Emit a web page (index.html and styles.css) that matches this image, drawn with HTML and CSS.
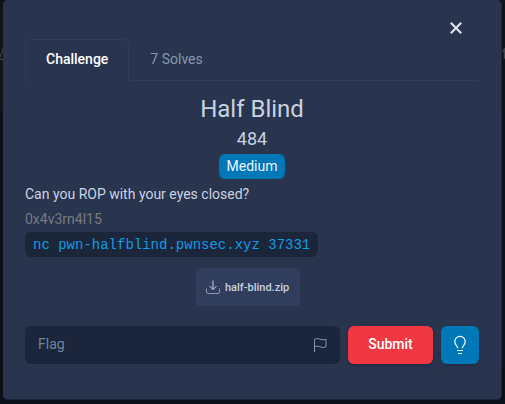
FILE: index.html
```html
<!DOCTYPE html>
<html lang="en">
<head>
<meta charset="utf-8">
<title>Half Blind</title>
<link rel="stylesheet" href="styles.css">
</head>
<body>
<div class="backdrop" aria-hidden="true"><svg class="peek-left" width="4" height="16" viewBox="0 0 4 16"><path d="M4 1 0 12.500M0 14.500h4"/></svg><span class="peek-right">t</span></div>
<main class="modal">
  <header class="modal-top">
    <button class="close" aria-label="Close"><svg width="12" height="12" viewBox="0 0 12 12"><path d="M.8.8 11.200 11.200M11.200.8.8 11.200"/></svg></button>
  </header>
  <nav class="tabs">
    <a class="tab active">Challenge</a>
    <a class="tab">7 Solves</a>
  </nav>
  <h1>Half Blind</h1>
  <h2>484</h2>
  <div class="tags"><span class="badge">Medium</span></div>
  <p>Can you ROP with your eyes closed?</p>
  <p class="author">0x4v3rn4l15</p>
  <div class="command"><code>nc pwn-halfblind.pwnsec.xyz 37331</code></div>
  <div class="files">
    <a class="file"><svg width="16" height="16" viewBox="0 0 16 16"><path class="tray" d="M1.500 8.500v3.500q0 1.500 1.500 1.500h10q1.500 0 1.500-1.500V8.500"/><path d="M8 .5v9M4.500 6 8 9.500 11.500 6"/></svg>half-blind.zip</a>
  </div>
  <form class="submit-row">
    <div class="field">
      <span>Flag</span>
      <svg width="16" height="16" viewBox="0 0 16 16"><path d="M2.500 15V2.200Q5 .8 8 2.200t6 0v7.600q-3 1.400-6 0t-5.500 0"/></svg>
    </div>
    <button type="button" class="send">Submit</button>
    <button type="button" class="hint" aria-label="Hint"><svg width="16" height="20" viewBox="0 0 16 20"><path d="M5.700 13.200C5.700 10.900 2.800 9.900 2.800 6.500a5.200 5.200 0 0 1 10.400 0C13.200 9.900 10.300 10.900 10.300 13.200"/><path d="M5 15.500h6M6 18.500h4"/></svg></button>
  </form>
</main>
</body>
</html>
```
FILE: styles.css
```css
* { box-sizing: border-box; }
body {
  margin: 0;
  height: 404px;
  overflow: hidden;
  background: linear-gradient(#10131c 0 110px, #0d111b 110px 368px, #0b0f18 368px);
  color: #c8d3e1;
  font: 14px/20px Roboto, sans-serif;
}
svg { fill: none; stroke: currentColor; flex: none; }
button { border: 0; padding: 0; font: inherit; }
.backdrop { position: absolute; inset: 0; color: #454950; font-size: 16px; }
.peek-left { position: absolute; left: 0; top: 45px; }
.peek-right { position: absolute; left: 502px; top: 44px; }
.modal {
  position: relative;
  width: 499px;
  height: 400px;
  margin-left: 3px;
  padding: 0 22px;
  background: #29344e;
  border: 1px solid #1d2433;
  border-top-color: #29344e;
  border-left: 0;
  border-radius: 5px;
}
.modal-top { height: 38px; display: flex; justify-content: flex-end; padding: 21px 17px 0 0; }
.close { width: 12px; height: 12px; background: none; color: #dce3ea; display: flex; }
.close svg { stroke-width: 2.2; }
.tabs { display: flex; height: 42px; border-bottom: 1px solid #313d60; }
.tab { height: 42px; padding: 9px 20px; border: 1px solid transparent; color: #8796b0; }
.active {
  color: #fff;
  font-weight: 500;
  border-color: #313d60 #313d60 #29344e;
  border-radius: 6px 6px 0 0;
}
h1, h2, p { margin: 0; font-weight: 400; }
h1 { margin-top: 12px; font-size: 24px; line-height: 32px; text-align: center; }
h2 { margin-top: 2px; font-size: 18px; line-height: 24px; text-align: center; }
.tags { display: flex; justify-content: center; margin: 3px 0 5px; }
.badge { height: 25px; padding: 2px 8px; border-radius: 6px; background: #0078b7; color: #eef5fa; }
.author { margin-top: 5px; color: #777b80; }
.command { display: flex; margin-top: 3px; }
code {
  height: 25px;
  padding: 1px 8px 0;
  border-radius: 6px;
  background: #1b263b;
  color: #139be3;
  font: 14px/25px "Liberation Mono", monospace;
}
.files { display: flex; justify-content: center; margin-top: 11px; padding-right: 8px; }
.file {
  display: flex;
  align-items: center;
  gap: 4px;
  width: 104px;
  height: 38px;
  padding: 1px 0 0 9px;
  border-radius: 4px;
  background: #313d5d;
  color: #c8d3e1;
  font-size: 11px;
  font-weight: 500;
}
.tray { stroke: #8995aa; }
.submit-row { display: flex; gap: 8px; margin-top: 20px; }
.field {
  display: flex;
  align-items: center;
  justify-content: space-between;
  width: 315px;
  height: 38px;
  padding: 0 12px 0 13px;
  border-radius: 6px;
  background: #1b263d;
  color: #8493aa;
}
.field span { padding-bottom: 2px; color: #72839d; }
.send, .hint { height: 38px; border-radius: 6px; box-shadow: 0 2px 3px #1b263d80; }
.send { width: 85px; padding-bottom: 2px; background: #f03742; color: #fff; font-weight: 500; }
.hint { width: 38px; background: #0078b7; color: #fff; display: flex; align-items: center; justify-content: center; }
.hint svg { stroke-width: 1.2; }
```
